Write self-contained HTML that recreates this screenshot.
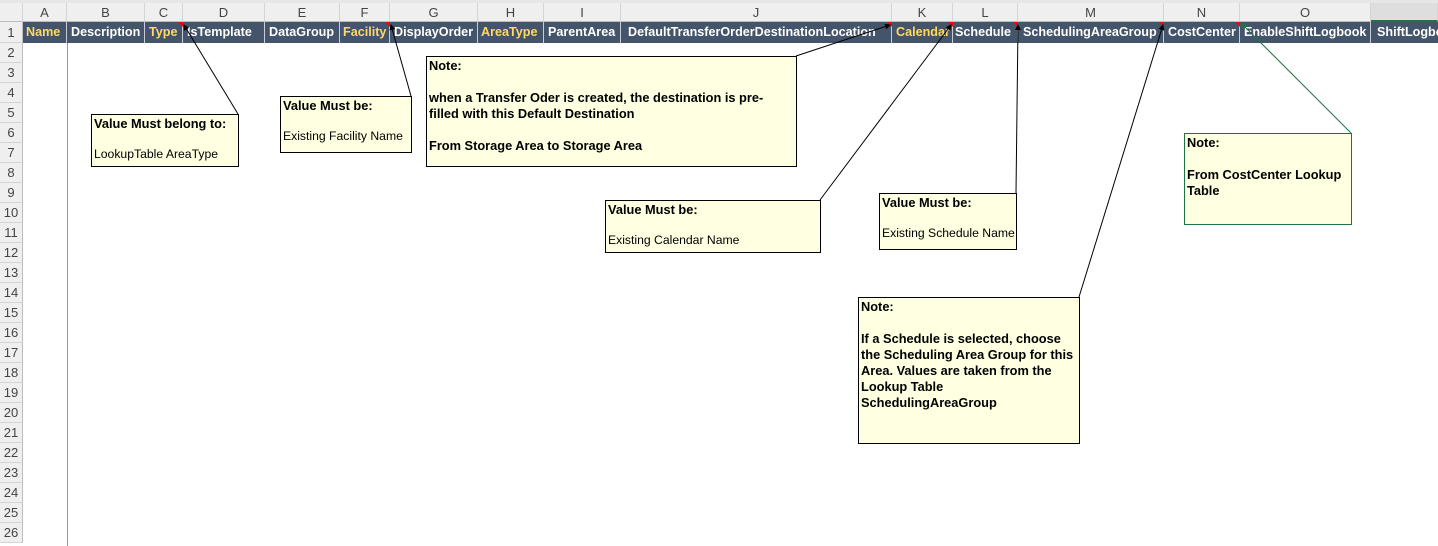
<!DOCTYPE html>
<html><head><meta charset="utf-8"><style>
*{margin:0;padding:0;box-sizing:border-box}
body{width:1438px;height:546px;overflow:hidden;background:#fff;position:relative;font-family:"Liberation Sans",sans-serif}
.ch{position:absolute;top:3px;height:19px;background:#efefef;border-right:1px solid #d4d4d4;border-bottom:1px solid #bdbdbd;font-size:13px;color:#444;text-align:center;line-height:19px}
.h1{position:absolute;top:22px;height:21px;background:#44546a;border-right:1px solid #c9ccd2;color:#fff;font-weight:bold;font-size:12.6px;line-height:21px;text-align:left;padding-left:4px;white-space:nowrap;overflow:hidden}
.y{color:#ffd966}
.rn{position:absolute;left:0;width:23px;height:20px;background:#efefef;border-bottom:1px solid #d4d4d4;border-right:1px solid #bdbdbd;font-size:13px;color:#444;text-align:center;line-height:20px}
.note{position:absolute;background:#ffffe1;border:1px solid #000;font-family:"Liberation Sans",sans-serif;font-size:12.2px;line-height:15px;padding:1px 2px;white-space:pre;color:#000;overflow:hidden}
.b{font-weight:bold;font-size:12.8px}
.red{position:absolute;top:22px;width:0;height:0;border-top:5px solid #f00;border-left:5px solid transparent}
</style></head><body>
<div style="position:absolute;left:0;top:0;width:1438px;height:3px;background:#e6e6e6"></div>
<div class="ch" style="left:0;width:23px"></div>
<div class="ch" style="left:23px;width:44px">A</div>
<div class="ch" style="left:67px;width:78px">B</div>
<div class="ch" style="left:145px;width:38px">C</div>
<div class="ch" style="left:183px;width:82px">D</div>
<div class="ch" style="left:265px;width:75px">E</div>
<div class="ch" style="left:340px;width:50px">F</div>
<div class="ch" style="left:390px;width:88px">G</div>
<div class="ch" style="left:478px;width:66px">H</div>
<div class="ch" style="left:544px;width:77px">I</div>
<div class="ch" style="left:621px;width:271px">J</div>
<div class="ch" style="left:892px;width:61px">K</div>
<div class="ch" style="left:953px;width:65px">L</div>
<div class="ch" style="left:1018px;width:146px">M</div>
<div class="ch" style="left:1164px;width:76px">N</div>
<div class="ch" style="left:1240px;width:131px">O</div>
<div class="ch" style="left:1371px;width:67px;background:#dedede;border-bottom:2px solid #217346"></div>
<div class="rn" style="top:22px;height:21px;line-height:21px">1</div>
<div class="h1 y" style="left:23px;width:44px;padding-left:3px">Name</div>
<div class="h1" style="left:67px;width:78px">Description</div>
<div class="h1 y" style="left:145px;width:38px">Type</div>
<div class="h1" style="left:183px;width:82px">IsTemplate</div>
<div class="h1" style="left:265px;width:75px">DataGroup</div>
<div class="h1 y" style="left:340px;width:50px;padding-left:3px">Facility</div>
<div class="h1" style="left:390px;width:88px">DisplayOrder</div>
<div class="h1 y" style="left:478px;width:66px;padding-left:3px">AreaType</div>
<div class="h1" style="left:544px;width:77px">ParentArea</div>
<div class="h1" style="left:621px;width:271px;padding-left:7px">DefaultTransferOrderDestinationLocation</div>
<div class="h1 y" style="left:892px;width:61px">Calendar</div>
<div class="h1" style="left:953px;width:65px;padding-left:2px">Schedule</div>
<div class="h1" style="left:1018px;width:146px;padding-left:5px">SchedulingAreaGroup</div>
<div class="h1" style="left:1164px;width:76px">CostCenter</div>
<div class="h1" style="left:1240px;width:131px">EnableShiftLogbook</div>
<div class="h1" style="left:1371px;width:80px;padding-left:6px">ShiftLogbook</div>
<div class="red" style="left:178px"></div><div class="red" style="left:385px"></div><div class="red" style="left:887px"></div><div class="red" style="left:948px"></div><div class="red" style="left:1013px"></div><div class="red" style="left:1159px"></div><div class="red" style="left:1235px"></div>
<div style="position:absolute;left:67px;top:43px;width:1px;height:503px;background:#9a9a9a"></div>
<div class="rn" style="top:43px">2</div><div class="rn" style="top:63px">3</div><div class="rn" style="top:83px">4</div><div class="rn" style="top:103px">5</div><div class="rn" style="top:123px">6</div><div class="rn" style="top:143px">7</div><div class="rn" style="top:163px">8</div><div class="rn" style="top:183px">9</div><div class="rn" style="top:203px">10</div><div class="rn" style="top:223px">11</div><div class="rn" style="top:243px">12</div><div class="rn" style="top:263px">13</div><div class="rn" style="top:283px">14</div><div class="rn" style="top:303px">15</div><div class="rn" style="top:323px">16</div><div class="rn" style="top:343px">17</div><div class="rn" style="top:363px">18</div><div class="rn" style="top:383px">19</div><div class="rn" style="top:403px">20</div><div class="rn" style="top:423px">21</div><div class="rn" style="top:443px">22</div><div class="rn" style="top:463px">23</div><div class="rn" style="top:483px">24</div><div class="rn" style="top:503px">25</div><div class="rn" style="top:523px">26</div>
<svg style="position:absolute;left:0;top:0" width="1438" height="546">
<defs><marker id="a" markerWidth="6" markerHeight="6" refX="5" refY="3" orient="auto"><path d="M0,0L6,3L0,6z" fill="#000"/></marker><marker id="g" markerWidth="6" markerHeight="6" refX="5" refY="3" orient="auto"><path d="M0,0L6,3L0,6z" fill="#217346"/></marker></defs>
<g stroke="#000" stroke-width="1" fill="none">
<line x1="238" y1="114" x2="184" y2="25" marker-end="url(#a)"/>
<line x1="411" y1="96" x2="391" y2="25" marker-end="url(#a)"/>
<line x1="796" y1="56" x2="890" y2="25" marker-end="url(#a)"/>
<line x1="820" y1="200" x2="951" y2="25" marker-end="url(#a)"/>
<line x1="1016" y1="193" x2="1018" y2="25" marker-end="url(#a)"/>
<line x1="1079" y1="297" x2="1163" y2="25" marker-end="url(#a)"/>
<line x1="1351" y1="133" x2="1242" y2="24" stroke="#217346" marker-end="url(#g)"/>
</g></svg>
<div class="note" style="left:91px;top:114px;width:148px;height:53px"><span class="b">Value Must belong to:</span>

LookupTable AreaType</div>
<div class="note" style="left:280px;top:96px;width:132px;height:57px"><span class="b">Value Must be:</span>

Existing Facility Name</div>
<div class="note" style="left:426px;top:56px;width:371px;height:111px;" ><span class="b">Note:

when a Transfer Oder is created, the destination is pre-
filled with this Default Destination

From Storage Area to Storage Area</span></div>
<div class="note" style="left:605px;top:200px;width:216px;height:53px"><span class="b">Value Must be:</span>

Existing Calendar Name</div>
<div class="note" style="left:879px;top:193px;width:138px;height:57px"><span class="b">Value Must be:</span>

Existing Schedule Name</div>
<div class="note" style="left:858px;top:297px;width:222px;height:147px"><span class="b">Note:

If a Schedule is selected, choose
the Scheduling Area Group for this
Area. Values are taken from the
Lookup Table
SchedulingAreaGroup</span></div>
<div class="note" style="left:1184px;top:133px;width:168px;height:92px;border-color:#217346"><span class="b">Note:

From CostCenter Lookup
Table</span></div>
</body></html>
